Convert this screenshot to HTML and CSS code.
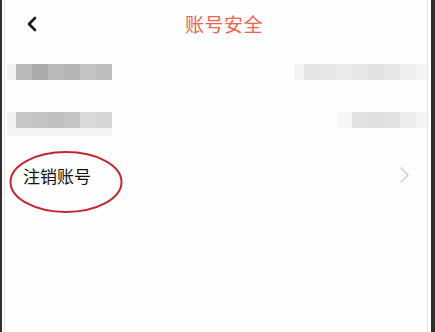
FILE: index.html
```html
<!DOCTYPE html>
<html lang="zh-CN">
<head>
  <meta charset="UTF-8">
  <meta name="viewport" content="width=device-width, initial-scale=1.0">
  <title>账号安全</title>
  <link rel="stylesheet" href="styles.css">
</head>
<body>
  <div class="device">
    <div class="page">
      <header class="nav-bar">
        <span class="back">
          <svg width="12" height="16" viewBox="0 0 12 16">
            <polyline points="9,2 3,8 9,14" fill="none" stroke="#111" stroke-width="2.6" stroke-linecap="round" stroke-linejoin="round"/>
          </svg>
        </span>
        <h1 class="nav-title">账号安全</h1>
      </header>

      <ul class="settings">
        <li class="row row-first">
          <span class="mosaic mosaic-name"></span>
          <span class="mosaic mosaic-value-a"></span>
        </li>
        <li class="row">
          <span class="mosaic mosaic-name-b"></span>
          <span class="mosaic mosaic-value-b"></span>
        </li>
        <li class="row row-cancel">
          <span class="label">注销账号</span>
          <svg class="arrow" width="12" height="18" viewBox="0 0 12 18">
            <polyline points="2,2 9,9 2,16" fill="none" stroke="#cfcfcf" stroke-width="1.6" stroke-linecap="round" stroke-linejoin="round"/>
          </svg>
          <!-- annotation mark from the screenshot -->
          <svg class="mark" width="116" height="66" viewBox="0 0 116 66">
            <ellipse cx="58" cy="32" rx="55.5" ry="30" fill="none" stroke="#c3262f" stroke-width="2"/>
          </svg>
        </li>
      </ul>
    </div>
  </div>
</body>
</html>
```

FILE: styles.css
```css
html, body {
  margin: 0;
  padding: 0;
  background-color: #fff;
  font-family: "Noto Sans CJK SC", "Noto Sans", sans-serif;
}

.device {
  height: 332px;
  box-sizing: border-box;
  border-left: 2px solid #2f2f2f;
  border-right: 4px solid #2f2f2f;
  padding: 0 3px 0 2px;
}

.page {
  height: 100%;
  box-sizing: border-box;
  border-left: 1px solid #e2e2e2;
  border-right: 1px solid #e6e6e6;
  background-color: #fefefe;
}

.nav-bar {
  display: flex;
  align-items: center;
  height: 46px;
  padding-left: 21px;
}

.back {
  display: flex;
  width: 12px;
  margin-top: 1px;
}

.nav-title {
  flex: 1;
  margin: 0;
  padding-right: 17px;
  text-align: center;
  font-size: 19px;
  font-weight: normal;
  color: #ea6450;
  letter-spacing: 0.5px;
}

.settings {
  list-style: none;
  margin: 0;
  padding: 0;
}

.row {
  display: flex;
  align-items: center;
  justify-content: space-between;
  height: 48px;
  padding: 0 0 0 2px;
}

.row-first {
  margin-top: 2px;
}

.mosaic {
  display: block;
  height: 16px;
}

.mosaic-name {
  width: 105px;
  background: linear-gradient(to right,
    #f2f2f2 0 9px, #bbb 9px 25px, #ababab 25px 41px, #bbb 41px 57px,
    #b4b4b4 57px 73px, #c3c3c3 73px 89px, #bdbdbd 89px 105px);
}

.mosaic-name-b {
  width: 105px;
  background: linear-gradient(to right,
    #f2f2f2 0 9px, #c7c7c7 9px 25px, #c4c4c4 25px 41px, #c0c0c0 41px 57px,
    #c5c5c5 57px 73px, #dadada 73px 89px, #d6d6d6 89px 105px);
  box-shadow: 0 8px 0 0 #f4f4f4;
}

.mosaic-value-a {
  width: 133px;
  background: linear-gradient(to right,
    #f4f4f4 0 10px, #e6e6e6 10px 26px, #e8e8e8 26px 42px, #eaeaea 42px 58px,
    #e8e8e8 58px 74px, #e2e2e2 74px 90px, #e7e7e7 90px 106px,
    #efefef 106px 122px, #f5f5f5 122px 133px);
}

.mosaic-value-b {
  width: 90px;
  background: linear-gradient(to right,
    #f7f7f7 0 15px, #e1e1e1 15px 31px, #dfdfdf 31px 47px, #e2e2e2 47px 63px,
    #ececec 63px 79px, #f5f5f5 79px 90px);
}

.row-cancel {
  position: relative;
  margin-top: 6px;
  padding: 0 16px 0 18px;
}

.label {
  font-size: 17px;
  color: #111;
  margin-top: 2px;
}

.arrow {
  display: block;
  margin-top: 1px;
}

.mark {
  position: absolute;
  left: 3px;
  top: 0;
}
```
